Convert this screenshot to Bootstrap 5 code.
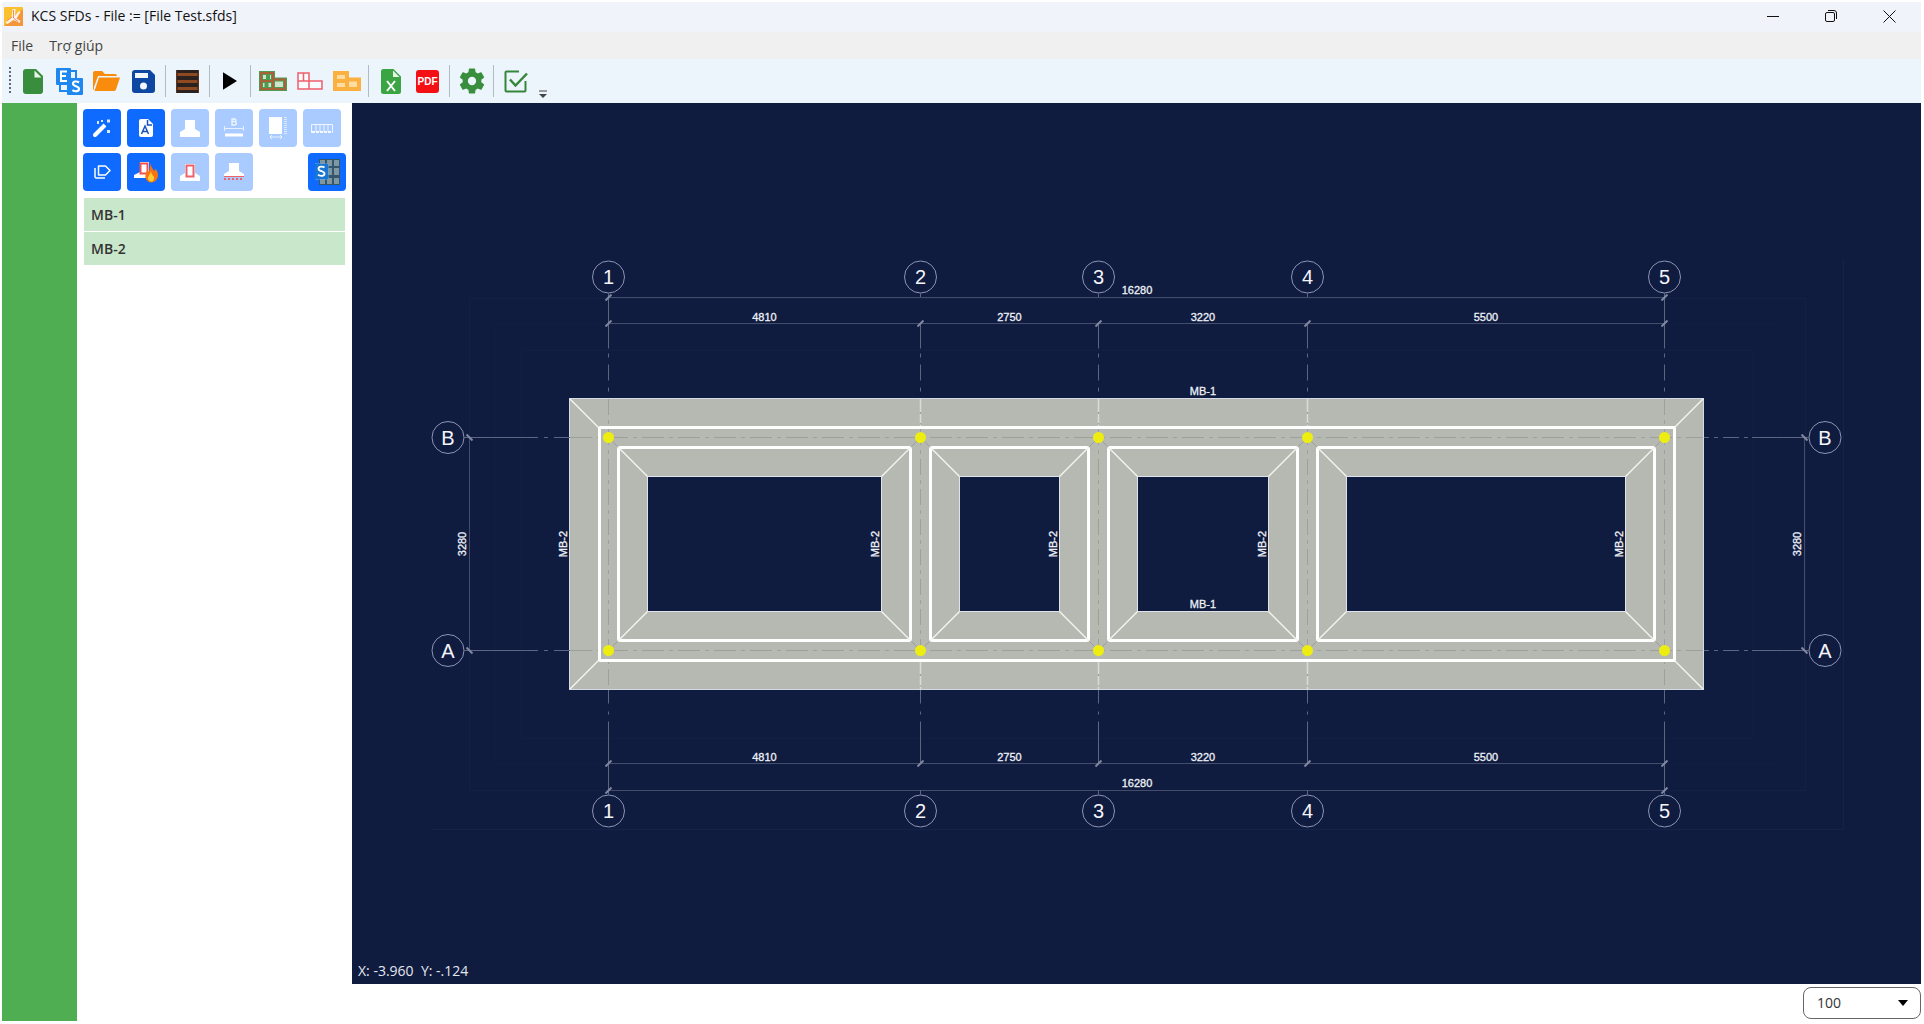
<!DOCTYPE html>
<html lang="vi">
<head>
<meta charset="utf-8">
<meta name="viewport" content="width=device-width, initial-scale=1">
<title>KCS SFDs - File := [File Test.sfds]</title>
<link rel="stylesheet" href="https://cdn.jsdelivr.net/npm/bootstrap@5.3.0/dist/css/bootstrap.min.css">
<style>
  body { font-family: "Open Sans", "Noto Sans", sans-serif; font-size: 14px; color: #222; background: #fff; }
  .app-shell { height: 100vh; padding: 2px 3px 3px 2px; }
  .title-strip { height: 30px; background: #f0f3f9; padding: 0 3px 2px 2px; color: #111; }
  .title-strip h1 { font-size: 14px; line-height: 20px; font-weight: 400; }
  .win-btn { width: 58px; height: 28px; padding: 0; border: 0; background: none; color: #111; line-height: 0; }
  .menu-strip { height: 27px; background: #f0f0f0; padding-left: 9px; }
  .menu-strip a { color: #444; text-decoration: none; line-height: 20px; }
  .tool-strip { height: 44px; background: #ecf4fc; padding-left: 7px; }
  .grip { width: 2px; height: 28px; margin-right: 3px; background: repeating-linear-gradient(#667 0 2px, transparent 2px 4px); }
  .tool-btn { width: 37px; height: 36px; padding: 0; border: 0; background: none; line-height: 0; }
  .tool-btn-run { width: 34px; }
  .tool-sep { width: 1px; height: 32px; margin: 0 3px; background: #b4bac2; }
  .more-btn { padding: 0; border: 0; background: none; margin: 0 0 5px 5px; line-height: 0; }
  .green-rail { width: 75px; background: #4fae51; flex: none; }
  .side-panel { width: 275px; flex: none; padding: 6px 6px 0 6px; }
  .cmd-grid { display: grid; grid-template-columns: repeat(5, 38px) 1fr; gap: 6px; }
  .cmd { width: 38px; height: 38px; padding: 0; border: 0; border-radius: 4px; background: #0f6bff; line-height: 0; }
  .cmd:disabled { background: #a9cbff; opacity: 1; border: 0; }
  .beam-list { margin: 7px 1px 0 1px; }
  .beam-list .list-group-item { background: #c9e7ca; border: 0; border-radius: 0; padding: 6px 7px; line-height: 21px; font-size: 14px; font-weight: 600; color: #333; margin-bottom: 1px; }
  .plan-area { background: #0f1b3f; min-height: 0; min-width: 0; }
  .plan-area > svg { width: 100%; height: 100%; display: block; }
  .coords { position: absolute; left: 6px; bottom: 3px; color: #e4e6f0; line-height: 20px; white-space: pre; }
  .foot-strip { height: 37px; }
  .zoom-pick { width: 118px; height: 32px; border: 1px solid #666; border-radius: 8px; padding: 0 24px 0 13px; font-size: 14px; line-height: 20px; color: #333; background: #fff url("data:image/svg+xml,%3Csvg xmlns='http://www.w3.org/2000/svg' width='10' height='6'%3E%3Cpath d='M0 0h10L5 6z'/%3E%3C/svg%3E") no-repeat right 12px center; }
  .axis { stroke: #5d6680; fill: none; }
  .bubble { stroke: #8d94b4; fill: none; stroke-width: 1; }
  .bubble-txt { font: 20px "Liberation Sans", Arial, sans-serif; fill: #f4f5fa; text-anchor: middle; }
  .dim { stroke: #434d69; fill: none; }
  .tick { stroke: #8188a0; stroke-width: 2; }
  .faint { stroke: #15234b; fill: none; }
  .dim-txt { font: 11px "Liberation Sans", Arial, sans-serif; fill: #eef0f6; stroke: #eef0f6; stroke-width: .3px; text-anchor: middle; }
</style>
<script src="https://cdn.jsdelivr.net/npm/bootstrap@5.3.0/dist/js/bootstrap.bundle.min.js"></script>
</head>
<body>
<div class="app-shell d-flex flex-column">
  <header class="title-strip d-flex align-items-center">
    <svg width="19" height="19" viewBox="0 0 19 19" aria-hidden="true"><rect width="19" height="19" rx="1" fill="#fbc02d"/><path d="M0 19L19 2v17z" fill="#f4963a"/><path d="M8.500 2h3l-.5 7 4-5 1.500 1-4 6.500 4 2.500-1 2-6-3-6 4-2-1.500 6-5z" fill="#fff3e8"/><path d="M3 14l5-4M9.500 3v8l5 4" stroke="#ef8a6a" fill="none"/></svg>
    <h1 class="mb-0 ms-2 me-auto">KCS SFDs - File := [File Test.sfds]</h1>
    <button class="win-btn" aria-label="Minimize"><svg width="12" height="12"><path d="M0 6.500h12" stroke="#111"/></svg></button>
    <button class="win-btn" aria-label="Restore"><svg width="12" height="12" fill="none" stroke="#111"><rect x=".5" y="2.500" width="9" height="9" rx="1.500"/><path d="M3 .5h6a2.500 2.500 0 0 1 2.500 2.500v6"/></svg></button>
    <button class="win-btn" aria-label="Close"><svg width="13" height="13"><path d="M.5 .5l12 12M12.500 .5l-12 12" stroke="#111"/></svg></button>
  </header>

  <nav class="menu-strip d-flex align-items-center gap-3" aria-label="Menu">
    <a href="#">File</a><a href="#">Trợ giúp</a>
  </nav>

  <div class="tool-strip d-flex align-items-center" role="toolbar" aria-label="Toolbar">
    <span class="grip"></span>
    <button class="tool-btn" aria-label="New"><svg width="20" height="25" viewBox="0 0 20 25"><path d="M3 0h10l7 7v15a3 3 0 0 1-3 3H3a3 3 0 0 1-3-3V3a3 3 0 0 1 3-3z" fill="#388e3c"/><path d="M11.500 1.500v7h7z" fill="#e8f5e9"/></svg></button>
    <button class="tool-btn" aria-label="ES link"><svg width="27" height="27" viewBox="0 0 27 27"><rect width="15" height="17" rx="1" fill="#1e88f0"/><rect x="11" y="10" width="16" height="17" rx="1" fill="#1e88f0"/><path d="M15 3h5v7M4 17v6h7" fill="none" stroke="#1e88f0" stroke-width="2"/><path d="M11 3.500H5v9.500h6M5 8h5" fill="none" stroke="#fff" stroke-width="2"/><path d="M23 14.500c-2-1.500-6-1.500-6 1.200 0 3 6 2 6 5 0 3-4.500 3.200-6.500 1.300" fill="none" stroke="#fff" stroke-width="2.200"/></svg></button>
    <button class="tool-btn" aria-label="Open"><svg width="27" height="20" viewBox="0 0 27 20"><path d="M2 0h7l3 3h10a2 2 0 0 1 2 2H5L1 16 1 19a2 2 0 0 1-1-2V2a2 2 0 0 1 2-2z" fill="#f98c0c"/><path d="M6 6.500h21L23 18.500a2 2 0 0 1-2 1.500H1.500z" fill="#f98c0c"/></svg></button>
    <button class="tool-btn" aria-label="Save"><svg width="23" height="23" viewBox="0 0 23 23"><path d="M3 0h15l5 5v15a3 3 0 0 1-3 3H3a3 3 0 0 1-3-3V3a3 3 0 0 1 3-3z" fill="#0d47a1"/><rect x="3" y="3" width="13" height="5" fill="#f2f7ff"/><circle cx="11.500" cy="16" r="3.500" fill="#f2f7ff"/></svg></button>
    <span class="tool-sep"></span>
    <button class="tool-btn" aria-label="Soil layers"><svg width="23" height="23" viewBox="0 0 23 23"><rect width="23" height="23" rx="1" fill="#2b211f"/><path d="M1.500 4.500h20M1.500 11.500h20M1.500 18.500h20" stroke="#8f4a22" stroke-width="3"/><path d="M.5 0v23M22.500 0v23" stroke="#5d3526"/></svg></button>
    <span class="tool-sep"></span>
    <button class="tool-btn tool-btn-run" aria-label="Run"><svg width="14" height="18" viewBox="0 0 15 19"><path d="M0 0l15 9.500L0 19z" fill="#000"/></svg></button>
    <span class="tool-sep"></span>
    <button class="tool-btn" aria-label="Foundation plan"><svg width="28" height="20" viewBox="0 0 28 20" fill="none"><path d="M2 2h12v6.500h12v9.500H2zM2 10h12v8M14 8.500V18M9 2v8M7.500 10v8" fill="#cfe3cf" stroke="#4f9a50" stroke-width="4"/><path d="M2 2h12v6.500h12v9.500H2zM2 10h12v8M14 8.500V18" stroke="#a8623a" stroke-width="2"/></svg></button>
    <button class="tool-btn" aria-label="Outline plan"><svg width="26" height="18" viewBox="0 0 26 18"><path d="M1 1h11v8h13v8H1zM1 9h11v8M6.500 1v8" fill="#fff" fill-opacity=".6" stroke="#ef5f6b" stroke-width="1.500"/></svg></button>
    <button class="tool-btn" aria-label="Beam plan"><svg width="28" height="20" viewBox="0 0 28 20"><path d="M2 2h12v6.500h12v9.500H2zM2 10h12v8" fill="#ffdca0" stroke="#fbb040" stroke-width="4"/></svg></button>
    <span class="tool-sep"></span>
    <button class="tool-btn" aria-label="Export Excel"><svg width="20" height="25" viewBox="0 0 20 25"><path d="M2.500 0h10L20 7.500v15a2.500 2.500 0 0 1-2.500 2.500h-15A2.500 2.500 0 0 1 0 22.500v-20A2.500 2.500 0 0 1 2.500 0z" fill="#3ba544"/><path d="M12 1.500V8h6.500z" fill="#e8f5e9"/><path d="M6 12l8 10M14 12L6 22" stroke="#fff" stroke-width="2"/></svg></button>
    <button class="tool-btn" aria-label="Export PDF"><svg width="23" height="23" viewBox="0 0 23 23"><rect width="23" height="23" rx="3" fill="#f40f15"/><text x="11.500" y="15" text-anchor="middle" font-family="Liberation Sans, sans-serif" font-weight="700" font-size="10" fill="#fff">PDF</text></svg></button>
    <span class="tool-sep"></span>
    <button class="tool-btn" aria-label="Settings"><svg width="26" height="26" viewBox="2 2 20 20"><path fill="#388e3c" d="M19.140 12.940c.04-.3.060-.61.060-.94s-.02-.64-.07-.94l2.030-1.580a.49.49 0 0 0 .12-.61l-1.920-3.320a.49.49 0 0 0-.59-.22l-2.390.96c-.5-.38-1.030-.7-1.620-.94L14.400 2.810A.48.48 0 0 0 13.920 2.400h-3.840a.47.47 0 0 0-.47.410l-.36 2.540c-.59.24-1.130.57-1.620.94l-2.390-.96a.48.48 0 0 0-.59.22L2.740 8.870a.48.48 0 0 0 .12.610l2.030 1.580c-.05.300-.09.630-.09.940s.02.640.070.940l-2.030 1.580a.49.49 0 0 0-.12.610l1.920 3.320c.12.220.37.290.59.220l2.390-.96c.5.380 1.030.7 1.620.94l.36 2.540c.05.240.24.410.48.410h3.840c.24 0 .44-.17.470-.41l.36-2.540c.59-.24 1.130-.56 1.620-.94l2.390.96c.22.080.47 0 .59-.22l1.920-3.320a.47.47 0 0 0-.12-.61zM12 15.200a3.200 3.200 0 1 1 0-6.400 3.200 3.200 0 0 1 0 6.400z"/></svg></button>
    <span class="tool-sep"></span>
    <button class="tool-btn" aria-label="Check"><svg width="24" height="23" viewBox="0 0 24 23" fill="none" stroke="#35863a"><path d="M15 1.500H2.500a1 1 0 0 0-1 1v18a1 1 0 0 0 1 1h18a1 1 0 0 0 1-1V11" stroke-width="2"/><path d="M6 9.500l5.500 6L23 3.500" stroke-width="2.500"/></svg></button>
    <button class="more-btn align-self-end" aria-label="More tools"><svg width="8" height="8"><path d="M0 1h8" stroke="#444"/><path d="M0 4h8L4 8z" fill="#444"/></svg></button>
  </div>

  <main class="d-flex flex-grow-1 overflow-hidden">
    <div class="green-rail"></div>
    <aside class="side-panel">
      <div class="cmd-grid">
        <button class="cmd btn btn-primary" aria-label="Wizard"><svg width="20" height="20" viewBox="0 0 20 20"><path d="M3 17l8-8" stroke="#fff" stroke-width="4" stroke-linecap="round"/><path d="M11.500 8.500l1.500-1.500" stroke="#fff" stroke-width="4"/><path d="M5 3h2v3H5zM15 1.500h3v3h-3zM15 12h3v3h-3zM9 2h2v2H9z" fill="#fff" opacity=".85"/></svg></button>
        <button class="cmd btn btn-primary" aria-label="Text file"><svg width="14" height="18" viewBox="0 0 14 18"><path d="M2 0h7l5 5v11a2 2 0 0 1-2 2H2a2 2 0 0 1-2-2V2a2 2 0 0 1 2-2z" fill="#fff"/><path d="M8.500 1v5H13M2.500 15L6 7 9.500 15M4 12.500h4" fill="none" stroke="#1551c0" stroke-width="1.500"/></svg></button>
        <button class="cmd btn btn-primary" disabled aria-label="Footing"><svg width="20" height="17" viewBox="0 0 20 17"><path d="M5 0h10v9l5 3v5H0v-5l5-3z" fill="#fff"/></svg></button>
        <button class="cmd btn btn-primary" disabled aria-label="Footing width"><svg width="22" height="20" viewBox="0 0 22 20"><path d="M9 1h2.500c2 0 2 2.500 0 2.500 2.500 0 2.500 3.500 0 3.500H9zM9 3.500h3" fill="none" stroke="#fff" stroke-width="1.300" opacity=".8"/><path d="M1 10.500h20M1.500 8v5M20.500 8v5" stroke="#fff" opacity=".7"/><path d="M2 17h18" stroke="#fff" stroke-width="3"/></svg></button>
        <button class="cmd btn btn-primary" disabled aria-label="Footing size"><svg width="20" height="22" viewBox="0 0 20 22"><rect x="1" width="13" height="17" fill="#fff"/><path d="M17.500 0v17" stroke="#fff" stroke-width="3" stroke-dasharray="1 1" opacity=".6"/><path d="M2 20h12M4 18l-2 2 2 2M12 18l2 2-2 2" stroke="#fff" fill="none" opacity=".7"/></svg></button>
        <button class="cmd btn btn-primary" disabled aria-label="Load"><svg width="22" height="11" viewBox="0 0 22 11"><path d="M.5 10V1.500h21V10M5 1v8M9 1v8M13 1v8M17 1v8" stroke="#fff" fill="none" opacity=".8"/><path d="M1 9h20" stroke="#fff" stroke-width="2" stroke-dasharray="3 1" opacity=".9"/></svg></button>
        <button class="cmd btn btn-primary" aria-label="Labels"><svg width="17" height="14" viewBox="0 0 17 14"><path d="M4.500 1h7L16 5.500 11.500 10h-7zM1 3v8.500a1.500 1.500 0 0 0 1.500 1.500H11" fill="none" stroke="#fff" stroke-width="1.500" stroke-linejoin="round"/></svg></button>
        <button class="cmd btn btn-primary" aria-label="Analyse footing"><svg width="25" height="23" viewBox="0 0 25 23"><path d="M6 1h9v10l5 3v3H0v-3l6-3z" fill="#fff"/><path d="M6.500 2.500h7v10h-7z" fill="none" stroke="#ef5350" stroke-width="2"/><path d="M16 2c1 4 3 6 4 8l2-2c2 4 3 7 1 10-2 4-9 5-11 0-2-4 1-6 1-9l2 2c1-3 1-6 1-9z" fill="#f9740c"/><path d="M17 10c0 4 4 5 3 8-1 4-6 3-6-1 0-2 2-3 3-7z" fill="#ffce3a"/></svg></button>
        <button class="cmd btn btn-primary" disabled aria-label="Reinforcement"><svg width="20" height="17" viewBox="0 0 20 17"><path d="M5 0h10v9l5 3v5H0v-5l5-3z" fill="#fff"/><path d="M6.500 1.500h7v11h-7z" fill="none" stroke="#ef6368" stroke-width="2"/></svg></button>
        <button class="cmd btn btn-primary" disabled aria-label="Soil pressure"><svg width="20" height="18" viewBox="0 0 20 18"><path d="M5 0h10v8l5 3v2H0v-2l5-3z" fill="#fff"/><path d="M0 13.500h20" stroke="#ef6368"/><path d="M0 16h20" stroke="#ef6368" stroke-width="2" stroke-dasharray="2 2"/></svg></button>
        <span></span>
        <button class="cmd btn btn-primary ms-auto" aria-label="Section table"><svg width="26" height="26" viewBox="0 0 26 26"><rect x="5" y="0" width="21" height="26" fill="#35566c"/><path d="M6 1h5v6H6zM13 1h5v6h-5zM20 1h5v6h-5zM13 9h5v7h-5zM20 9h5v7h-5zM6 19h5v6H6zM13 19h5v6h-5zM20 19h5v6h-5z" fill="#7f97a2"/><path d="M2.500 5H14v15H2.500M2 4v17" stroke="#5fa8ec" fill="none"/><rect x="1" y="5" width="13" height="15" fill="#1976d2"/><path d="M10.500 8.500c-2-1.500-6-1.300-6 1.200 0 3 6 2 6 5 0 2.500-4.500 2.800-6.500 1" fill="none" stroke="#fff" stroke-width="1.800"/></svg></button>
      </div>
      <div class="beam-list list-group">
        <button class="list-group-item list-group-item-action">MB-1</button>
        <button class="list-group-item list-group-item-action">MB-2</button>
      </div>
    </aside>

    <section class="d-flex flex-column flex-grow-1">
      <div class="plan-area position-relative flex-grow-1">
        <svg id="plan" viewBox="352 103 1569 881" role="img" aria-label="Foundation plan"></svg>
        <div class="coords">X: -3.960  Y: -.124</div>
      </div>
      <footer class="foot-strip d-flex justify-content-end align-items-center">
        <select class="zoom-pick form-select" aria-label="Zoom"><option>100</option><option>50</option></select>
      </footer>
    </section>
  </main>
</div>

<script>
  // Strip-foundation plan: column axes, row axes, slab, voids and dimensions.
  const xs = [608.5, 920.5, 1098.5, 1307.5, 1664.5], ys = [437.5, 650.5];
  const spans = [4810, 2750, 3220, 5500];
  let out = '';
  const line = (a, b, c, d, cls, more = '') => { out += `<line x1="${a}" y1="${b}" x2="${c}" y2="${d}" class="${cls}" ${more}/>`; };
  const rect = (x, y, r, b, more) => { out += `<rect x="${x}" y="${y}" width="${r - x}" height="${b - y}" ${more}/>`; };
  const text = (x, y, s, cls = 'dim-txt') => { out += `<text x="${x}" y="${y}" class="${cls}">${s}</text>`; };
  const vtext = (x, y, s) => { out += `<text transform="translate(${x} ${y}) rotate(-90)" class="dim-txt">${s}</text>`; };
  const tick = (x, y, k = 1) => line(x - 3, y + 3 * k, x + 3, y - 3 * k, 'tick');

  // Faint extents around the drawing
  rect(469.5, 298.5, 1805.5, 790.5, 'class="faint" opacity=".7"');
  rect(495.5, 324.5, 1779.5, 764.5, 'class="faint" opacity=".45"');
  rect(521.5, 350.5, 1753.5, 738.5, 'class="faint" opacity=".5"');
  line(432, 829.5, 1843, 829.5, 'faint');
  line(1843.5, 260, 1843.5, 829, 'faint');

  // Slab, voids and beam edges
  rect(569.5, 398.5, 1703.5, 689.5, 'fill="#b6b9b1" stroke="#d3dae6"');
  [[570, 399, 599, 428], [1703, 399, 1674, 428], [570, 689, 599, 660], [1703, 689, 1674, 660]]
    .forEach(p => line(...p, '', 'stroke="#f3f4ee" stroke-width="1.500"'));
  ys.forEach(y => line(570, y, 1703, y, '', 'stroke="#9da19a" stroke-dasharray="22 5 4 5"'));
  xs.forEach(x => {
    line(x, 399, x, 689, '', 'stroke="#9da19a" stroke-dasharray="16 5 4 5"');
    if (x > 610 && x < 1660) {
      line(x, 399, x, 427, '', 'stroke="#d9dbd6" stroke-width="1.500" stroke-dasharray="13 2 9 2"');
      line(x, 661, x, 689, '', 'stroke="#d9dbd6" stroke-width="1.500" stroke-dasharray="13 2 9 2"');
    }
    ys.forEach(y => {
      const dy = y < 500 ? 9 : -9;
      if (x > 610) line(x - 9, y + dy, x, y, '', 'stroke="#9a9f98"');
      if (x < 1660) line(x, y, x + 9, y + dy, '', 'stroke="#9a9f98"');
    });
  });
  rect(599.5, 427.5, 1674.5, 660.5, 'fill="none" stroke="#fff" stroke-width="3" rx="1"');
  for (let i = 0; i < 4; i++) {
    const l = xs[i] + 10, r = xs[i + 1] - 10, t = 447.5, b = 640.5;
    rect(l, t, r, b, 'fill="none" stroke="#fff" stroke-width="3" rx="2"');
    [[l, t, 1, 1], [r, t, -1, 1], [l, b, 1, -1], [r, b, -1, -1]]
      .forEach(([x, y, u, v]) => line(x, y, x + 29 * u, y + 29 * v, '', 'stroke="#f3f4ee" stroke-width="1.500"'));
    rect(l + 29, t + 29, r - 29, b - 29, 'fill="#0f1b3f" stroke="#dfe3ea"');
  }

  // Column axes with bubbles, dimension chains above and below
  [[277, 297, 323.5, 1], [811, 790, 763.5, -1]].forEach(([bub, total, chain, s]) => {
    line(609, total + .5, 1665, total + .5, 'dim');
    line(609, chain, 1665, chain, 'dim');
    xs.forEach((x, i) => {
      const edge = s > 0 ? 398 : 690;
      out += `<circle cx="${x}" cy="${bub}" r="16" class="bubble"/>`;
      text(x, bub + 7, i + 1, 'bubble-txt');
      line(x, bub + 16 * s, x, i && i < 4 ? total : chain, 'axis');
      if (s > 0) line(x, chain, x, edge, 'axis', 'stroke-dasharray="25 5 4 7 16 7 4 9"');
      else line(x, chain, x, edge, 'axis', 'stroke-dasharray="42 7 3 8 20"');
      tick(x, chain);
      if (!i || i === 4) tick(x, total + .5);
    });
    spans.forEach((v, i) => text((xs[i] + xs[i + 1]) / 2, chain - 3, v));
    text(1137, total - 3, 16280);
  });

  // Row axes with bubbles
  [[448, 469.5, 466, 1], [1825, 1804.5, 1801, -1]].forEach(([bub, d, tx, s]) => {
    line(d, ys[0], d, ys[1], 'dim');
    vtext(tx, 544, 3280);
    ys.forEach((y, i) => {
      out += `<circle cx="${bub}" cy="${y}" r="16" class="bubble"/>`;
      text(bub, y + 7, 'BA'[i], 'bubble-txt');
      line(bub + 16 * s, y, s > 0 ? 570 : 1704, y, 'axis', s > 0 ? 'stroke-dasharray="74 6 4 6 20"' : 'stroke-dasharray="57 4 4 5 16 5 4 5 16"');
      tick(d, y, -1);
    });
  });

  // Column nodes and beam marks
  xs.forEach(x => {
    ys.forEach(y => { out += `<circle cx="${x}" cy="${y}" r="5.500" fill="#eded12"/>`; });
    vtext(x - 42, 544, 'MB-2');
  });
  text(1203, 395, 'MB-1');
  text(1203, 608, 'MB-1');
  document.getElementById('plan').innerHTML = out;
</script>
</body>
</html>
